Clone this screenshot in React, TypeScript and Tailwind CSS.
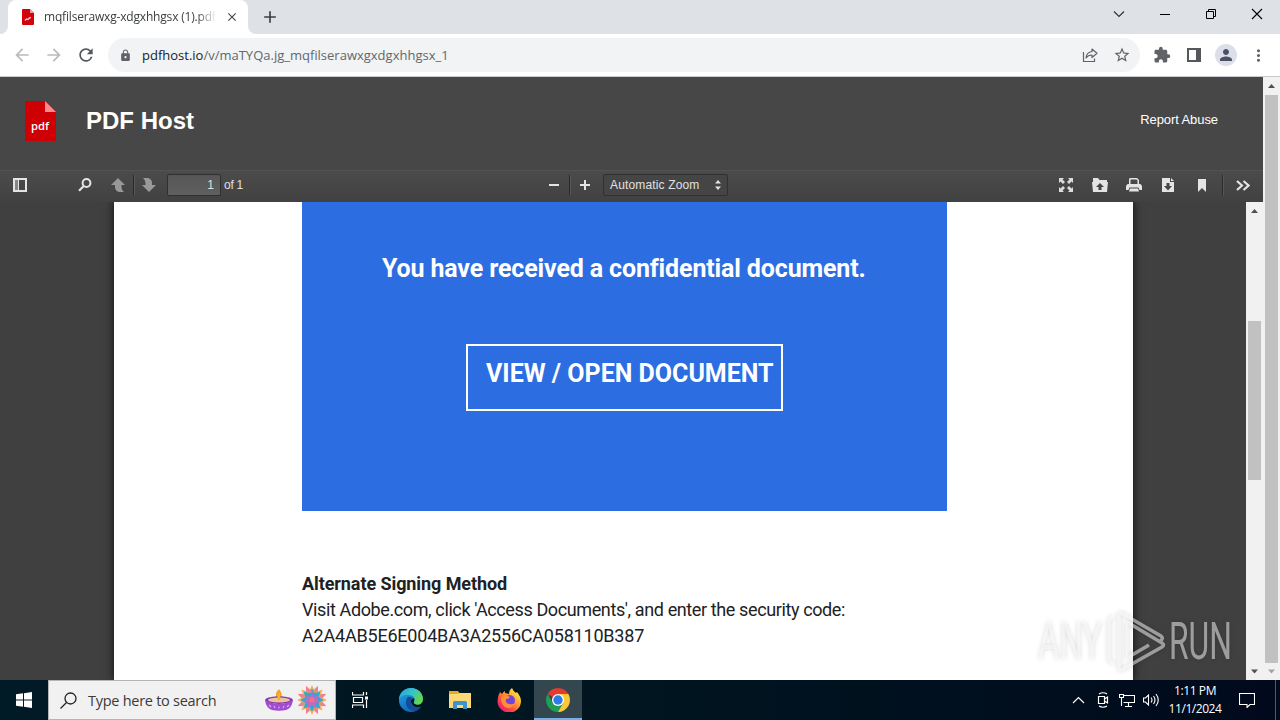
import type { ReactNode } from "react"
import {
  MdAdd,
  MdArrowBack,
  MdArrowForward,
  MdClose,
  MdExtension,
  MdLock,
  MdMoreVert,
  MdPerson,
  MdRefresh,
  MdStarBorder,
} from "react-icons/md"

type IconProps = {
  w: number
  h: number
  className?: string
  children: ReactNode
}

const Icon = ({ w, h, className = "", children }: IconProps) => (
  <svg width={w} height={h} viewBox={`0 0 ${w} ${h}`} className={`shrink-0 ${className}`} fill="none">
    {children}
  </svg>
)

const TabStrip = () => {
  return (
    <div className="flex h-[34px] w-full shrink-0 items-end bg-[#dee1e6]">
      <Icon w={8} h={8}>
        <path d="M8 0v8H0a8 8 0 0 0 8-8z" fill="#fff" />
      </Icon>
      <div className="flex h-[34px] w-[240px] items-center rounded-t-lg bg-white pl-[14px]">
        <Icon w={12} h={16}>
          <path d="M0 1q0-1 1-1h7l4 4v11q0 1-1 1H1q-1 0-1-1z" fill="#d0040a" />
          <path d="M8 0l4 4H8z" fill="#f79a9a" />
          <path d="M3 11.500l1.500-1.500 1.500.500 1.500-1.500 1.500-.500" stroke="#f8b9b9" strokeWidth="1.500" />
        </Icon>
        <span className="ml-[10px] w-[174px] whitespace-nowrap font-['Open_Sans',sans-serif] text-[12px] leading-4 tracking-[-0.180px] text-[#3c4043] [mask-image:linear-gradient(to_right,black_88%,transparent_99%)]">
          mqfilserawxg-xdgxhhgsx (1).pdf
        </span>
        <MdClose className="ml-[7px] h-[14px] w-[14px] text-[#45494d]" />
      </div>
      <Icon w={8} h={8}>
        <path d="M0 0v8h8a8 8 0 0 1-8-8z" fill="#fff" />
      </Icon>
      <div className="flex h-[34px] flex-1 items-center">
        <MdAdd className="ml-1 h-5 w-5 text-[#3c4043]" />
        <div className="ml-auto flex items-center pr-[17px] pb-[6px] text-black">
          <Icon w={12} h={12}>
            <path d="M1 3.500l5 5 5-5" stroke="#333" strokeWidth="1.200" />
          </Icon>
          <Icon w={12} h={12} className="ml-[34px]">
            <path d="M1 6.500h10" stroke="currentColor" />
          </Icon>
          <Icon w={12} h={12} className="ml-[34px]">
            <path d="M1.500 3.500h7v7h-7zM3.500 3V1.500h7v7H9" stroke="currentColor" />
          </Icon>
          <Icon w={12} h={12} className="ml-[34px]">
            <path d="M1 1l10 10M11 1L1 11" stroke="currentColor" strokeWidth="1.100" />
          </Icon>
        </div>
      </div>
    </div>
  )
}

const AddressBar = () => {
  return (
    <div className="flex h-[43px] w-full shrink-0 items-center border-b border-[#c8cacd] bg-white pl-3">
      <MdArrowBack className="h-5 w-5 text-[#b9bbbe]" />
      <MdArrowForward className="ml-3 h-5 w-5 text-[#b9bbbe]" />
      <MdRefresh className="ml-3 h-5 w-5 text-[#54585c]" />
      <div className="ml-3 flex h-[34px] w-[1032px] items-center rounded-full bg-[#f1f3f4] pr-[9px] pl-[11px]">
        <MdLock className="h-[13px] w-[13px] text-[#5f6368]" />
        <span className="ml-[10px] whitespace-nowrap font-['Open_Sans',sans-serif] text-[13px] leading-4 text-[#63676b]">
          <span className="text-[#202124]">pdfhost.io</span>/v/maTYQa.jg_mqfilserawxgxdgxhhgsx_1
        </span>
        <Icon w={16} h={16} className="ml-auto text-[#5f6368]">
          <path d="M1.500 5v9.500h11V11.500" stroke="currentColor" strokeWidth="1.200" />
          <path d="M10 2l5 4.300-5 4.200V8C7.500 8 5.500 8.700 4 11c.300-3.800 2.400-6 6-6.500z" stroke="currentColor" strokeWidth="1.200" strokeLinejoin="round" />
        </Icon>
        <MdStarBorder className="ml-[15px] h-[18px] w-[18px] text-[#5f6368]" />
      </div>
      <MdExtension className="ml-[13px] h-[18px] w-[18px] text-[#5f6368]" />
      <Icon w={14} h={14} className="ml-4">
        <path d="M0 0h14v14H0zM2 2v10h7V2z" fill="#54585d" fillRule="evenodd" />
      </Icon>
      <div className="ml-[14px] flex h-[22px] w-[22px] items-center justify-center rounded-full bg-[#dcdfe8]">
        <MdPerson className="h-[18px] w-[18px] text-[#4b5266]" />
      </div>
      <MdMoreVert className="ml-[12px] h-[19px] w-[19px] text-[#5f6368]" />
    </div>
  )
}

const SiteHeader = () => {
  return (
    <div className="flex h-[93px] shrink-0 items-center bg-[#474747] pr-[45px] pb-[5px] pl-[25px]">
      <svg width="32" height="40" viewBox="0 0 32 40" className="shrink-0">
        <path d="M0 1q0-1 1-1h19l11 11v28q0 1-1 1H1q-1 0-1-1z" fill="#ce0003" />
        <path d="M20 0l11 11H20z" fill="#fb8b8b" />
        <text x="6" y="29" fill="#fff" className="font-['Open_Sans',sans-serif] text-[11.500px] font-semibold" textLength="18" lengthAdjust="spacingAndGlyphs">
          pdf
        </text>
      </svg>
      <h1 className="ml-[29px] font-['Liberation_Sans',Arial,sans-serif] text-2xl font-bold text-white">PDF Host</h1>
      <a className="mb-[2px] ml-auto font-['Liberation_Sans',Arial,sans-serif] text-[13px] tracking-[-0.080px] text-white">Report Abuse</a>
    </div>
  )
}

const Divider = ({ className = "" }: { className?: string }) => (
  <div className={`h-5 w-px shrink-0 bg-[#2a2a2a] shadow-[1px_0_0_#575757] ${className}`} />
)

const PdfToolbar = () => {
  return (
    <div className="flex h-8 shrink-0 items-center border-t border-[#525252] bg-linear-to-b from-[#4b4b4b] to-[#414141] pb-[3px] pl-[13px] font-['Liberation_Sans',Arial,sans-serif] text-xs text-[#e0e0e0]">
      <Icon w={14} h={14}>
        <path d="M0 0h14v14H0zM2 2v10h3V2zM6 2v10h6V2z" fill="#e4e4e4" fillRule="evenodd" />
        <path d="M2 2h3v10H2z" fill="#858585" />
      </Icon>
      <Icon w={14} h={14} className="ml-[51px]">
        <circle cx="8.500" cy="5" r="3.900" stroke="#e4e4e4" strokeWidth="2" />
        <path d="M5.500 8.200L1 12.700" stroke="#e4e4e4" strokeWidth="2.200" />
      </Icon>
      <Icon w={14} h={14} className="ml-[19px]">
        <path d="M7 0l7 7h-3.500v2.500q0 2.500 2.500 4.500H8Q4 13 4 9V7H0z" fill="#999" />
      </Icon>
      <Divider className="ml-[8px]" />
      <Icon w={14} h={14} className="ml-[8px]">
        <path d="M7 14L0 7h3.500V5Q3.500 2 1 0h5q4 1 4 5v2h4z" fill="#999" />
      </Icon>
      <div className="ml-[11px] flex h-[22px] w-[54px] items-center justify-end rounded-xs border border-[#303030] bg-linear-to-b from-[#565656] to-[#606060] pr-[6px]">1</div>
      <span className="ml-[3px] w-5 whitespace-nowrap tracking-[-0.250px]">of 1</span>

      <Icon w={10} h={10} className="ml-[305px]">
        <path d="M0 4h10v2H0z" fill="#e4e4e4" />
      </Icon>
      <Divider className="ml-[10px]" />
      <Icon w={10} h={10} className="ml-[10px]">
        <path d="M0 4h10v2H0zM4 0h2v10H4z" fill="#e4e4e4" />
      </Icon>
      <div className="ml-[13px] flex h-[22px] w-[125px] items-center rounded-xs border border-[#303030] bg-[#454545] pr-[6px] pl-[6px]">
        <span className="whitespace-nowrap tracking-[0.150px]">Automatic Zoom</span>
        <Icon w={6} h={10} className="ml-auto">
          <path d="M3 0l3 3.500H0zM3 10l3-3.500H0z" fill="#e4e4e4" />
        </Icon>
      </div>

      <Icon w={14} h={14} className="ml-[331px]">
        <path
          d="M0 0h5L3.500 1.500 6 4 4 6 1.500 3.500 0 5zM14 0H9l1.500 1.500L8 4l2 2 2.500-2.500L14 5zM0 14h5l-1.500-1.500L6 10 4 8l-2.500 2.500L0 9zM14 14H9l1.500-1.500L8 10l2-2 2.500 2.500L14 9z"
          fill="#ddd"
        />
      </Icon>
      <Icon w={16} h={14} className="ml-[19px]">
        <path d="M1 0h5l1.500 2H15v2H1z" fill="#e4e4e4" />
        <path d="M0 4h16l-1 10H1zM8 5L4 9h2.500v3h3V9H12z" fill="#e4e4e4" fillRule="evenodd" />
      </Icon>
      <Icon w={16} h={14} className="ml-[18px]">
        <path d="M4 0h7l2 2v4h1.500L16 8v4h-2.500L12.500 9.500h-9L2.500 12H0V8l1.500-2H3V1zM4.500 1.500V6h7V2.500l-1-1z" fill="#e4e4e4" fillRule="evenodd" />
        <path d="M4 10.500h8l1 3H3z" fill="#e4e4e4" />
      </Icon>
      <Icon w={12} h={14} className="ml-5">
        <path d="M0 0h8v4h4v10H0zM4.500 5v3H2l4 4.500L10 8H7.500V5z" fill="#e4e4e4" fillRule="evenodd" />
        <path d="M9 0l3 3H9z" fill="#e4e4e4" />
      </Icon>
      <Icon w={8} h={13} className="ml-6">
        <path d="M0 0h8v13L4 9l-4 4z" fill="#e4e4e4" />
      </Icon>
      <Divider className="ml-4" />
      <Icon w={14} h={11} className="ml-[13px]">
        <path d="M1 1l5 4.500L1 10M7.500 1l5 4.500-5 4.500" stroke="#e4e4e4" strokeWidth="2.200" />
      </Icon>
    </div>
  )
}

const Document = () => {
  return (
    <div className="flex h-[478px] w-[1019px] shrink-0 flex-col bg-white pl-[188px] font-[Roboto,sans-serif] shadow-[0_0_8px_1px_rgba(0,0,0,0.650)]">
      <div className="flex h-[309px] w-[645px] shrink-0 flex-col bg-[#2c6ee2] text-white">
        <p className="mt-[50px] ml-[80px] whitespace-nowrap text-[25px] leading-[34px] font-bold tracking-[-0.140px]">
          You have received a confidential document.
        </p>
        <div className="mt-[58px] ml-[164px] flex h-[67px] w-[317px] border-2 border-white pt-[11px] pl-[18px]">
          <span className="whitespace-nowrap text-[25px] leading-[34px] font-bold">VIEW / OPEN DOCUMENT</span>
        </div>
      </div>
      <div className="mt-[60px] whitespace-nowrap text-[18px] leading-[26px] text-[#202124]">
        <p className="font-bold tracking-[-0.080px]">Alternate Signing Method</p>
        <p className="tracking-[-0.385px]">Visit Adobe.com, click 'Access Documents', and enter the security code:</p>
        <p className="tracking-[-0.200px]">A2A4AB5E6E004BA3A2556CA058110B387</p>
      </div>
    </div>
  )
}

type ScrollbarProps = { thumb: string; downColor: string }

const Scrollbar = ({ thumb, downColor }: ScrollbarProps) => (
  <div className="flex w-[17px] shrink-0 flex-col items-center bg-[#f1f1f1]">
    <Icon w={17} h={18}>
      <path d="M5 11l3.500-4 3.500 4z" fill="#505050" />
    </Icon>
    <div className={`w-[13px] bg-[#c1c1c1] ${thumb}`} />
    <Icon w={17} h={17} className="mt-auto">
      <path d="M5 6.500l3.500 4 3.500-4z" fill={downColor} />
    </Icon>
  </div>
)

const Watermark = () => (
  <svg width="210" height="70" viewBox="0 0 210 70" className="absolute top-[608px] left-[1034px] overflow-visible drop-shadow-[0_0_2px_rgba(0,0,0,0.300)]" fill="none">
    <g fill="#fff" fillOpacity="0.500" className="font-[Roboto,sans-serif] text-[51px]">
      <text x="4" y="51" textLength="64" lengthAdjust="spacingAndGlyphs">
        ANY
      </text>
      <text x="135" y="51" textLength="63" lengthAdjust="spacingAndGlyphs">
        RUN
      </text>
    </g>
    <path
      d="M79 9q-4 1-4 5v36q0 4 4 5M115 37L93 50V14l35 21q3 2 0 4L89 61q-4 2-4-2V8q0-4 4-2l38 22q3 3-1 5"
      stroke="#fff"
      strokeOpacity="0.500"
      strokeWidth="3.600"
      strokeLinejoin="round"
    />
  </svg>
)

const Taskbar = () => {
  return (
    <div className="flex h-10 w-full shrink-0 items-center bg-linear-to-r from-[#001a26] via-[#001520] to-[#000a1c] font-['Open_Sans',sans-serif]">
      <Icon w={16} h={16} className="ml-4">
        <path d="M0 2.300L7 1.300v6.200H0zM8 1.150L16 0v7.500H8zM0 8.500h7v6.200l-7-1zM8 8.500h8V16l-8-1.150z" fill="#fff" />
      </Icon>
      <div className="ml-4 flex h-10 w-72 items-center border border-[#b5b5b5] bg-[#f1f1f1] pl-[11px]">
        <Icon w={17} h={17}>
          <circle cx="10.500" cy="6.500" r="5.500" stroke="#222" strokeWidth="1.300" />
          <path d="M6.500 10.500L.500 16.500" stroke="#222" strokeWidth="1.300" />
        </Icon>
        <span className="mt-px ml-[11px] w-[129px] whitespace-nowrap text-[14.500px] tracking-[-0.270px] text-[#3a3a3a]">Type here to search</span>
        <svg width="28" height="22" viewBox="0 0 28 22" className="ml-[48px]">
          <path d="M14 0q4 5 2 10h-4q-3-5 2-10z" fill="#f6a21c" />
          <path d="M0 11q0-3 14-4 14 1 14 4 0 3-14 4-14-1-14-4z" fill="#8438ae" />
          <ellipse cx="14" cy="11" rx="11" ry="2.500" fill="#ecc39a" />
          <path d="M14 3q2.500 4 1 8h-2q-2-4 1-8z" fill="#f9b02c" />
          <path d="M0 11q7 4 14 4t14-4q-1 8-7 10-7 1.500-14 0-6-2-7-10z" fill="#a14bd1" />
          <path d="M4 16l2 2M9 17l1 2M14 17.500v2M19 17l-1 2M24 16l-2 2" stroke="#d9a4f5" strokeWidth="1.200" />
        </svg>
        <svg width="32" height="32" viewBox="-16 -16 32 32" className="ml-[3px]">
          {[0, 45, 90, 135, 180, 225, 270, 315].map((angle) => (
            <g key={angle} transform={`rotate(${angle})`}>
              <path d="M0-15.500l4 9h-8z" fill="#ee7f96" transform="rotate(22.500)" />
              <path d="M0-15l4 9h-8z" fill="#f4b04c" />
              <path d="M0-11.500l4 6h-8z" fill="#35a8cf" />
            </g>
          ))}
          <circle r="7.500" fill="#36a5d4" />
          <path d="M0-7l2 4 5-2-2 5 4 2-5 1 0 5-4-3-4 3 0-5-5-1 4-3-2-4 5 2z" fill="#c06ac0" />
          <circle r="2.500" fill="#f3708a" />
        </svg>
      </div>

      <Icon w={16} h={18} className="ml-4 text-white">
        <path d="M.500 1v3h11V1M.500 17v-3h11v3M1.500 6.500h9v5h-9zM14.500 1v3M14.500 9v8" stroke="currentColor" strokeWidth="1.200" />
        <path d="M13 5.500h3v3h-3z" fill="currentColor" />
      </Icon>

      <svg width="24" height="24" viewBox="0 0 24 24" className="ml-[31px]">
        <defs>
          <linearGradient id="edgeTop" x1="0" y1="0" x2="1" y2="0.500">
            <stop offset="0" stopColor="#249fdc" />
            <stop offset="0.500" stopColor="#32c2cf" />
            <stop offset="1" stopColor="#62d84b" />
          </linearGradient>
          <linearGradient id="edgeBody" x1="0" y1="0" x2="0.500" y2="1">
            <stop offset="0" stopColor="#2ba5e3" />
            <stop offset="1" stopColor="#0d66bd" />
          </linearGradient>
        </defs>
        <path d="M12 0A12 12 0 1 0 22 18.500Q17 21 13.500 17L24 12A12 12 0 0 0 12 0z" fill="url(#edgeBody)" />
        <path d="M0 11C1 4 6 0 12 0c7 0 12 5 12 11 0 4-3 6-6 6-2 0-4-1-3-3 2-4-1-7-5-7C6 6 2 8 0 11z" fill="url(#edgeTop)" />
        <path d="M8 10c-3 5 0 13 8 13.300q4-1.300 6-4.500c-4 2-9 .500-10-4-.500-2 0-4 1-5-2-1.500-4-1.200-5 .200z" fill="#124d97" />
        <path d="M14.500 10q-3 1-2.500 4 1 4 5 4 3 0 5-1.500-3 .500-5 0-3-1-2-3 1-2-.500-3.500z" fill="#001722" />
      </svg>

      <svg width="22" height="19" viewBox="0 0 22 19" className="ml-[26px]">
        <path d="M0 0h9l1.500 2H22v15H0z" fill="#e8a92b" />
        <path d="M0 3h9l1.500-1H22v15H0z" fill="#fcd975" />
        <path d="M4 11.500q0-1.500 1.500-1.500h11q1.500 0 1.500 1.500V18h-4v-4H8v4H4z" fill="#3e93cf" />
      </svg>

      <svg width="24" height="24" viewBox="0 0 24 24" className="ml-[26px]">
        <defs>
          <linearGradient id="fox" x1="0.900" y1="0.100" x2="0.200" y2="0.900">
            <stop offset="0" stopColor="#fff04b" />
            <stop offset="0.400" stopColor="#ffa22c" />
            <stop offset="0.700" stopColor="#ff4f43" />
            <stop offset="1" stopColor="#e81f74" />
          </linearGradient>
        </defs>
        <path d="M3 4l2 2q1-2 3-3v2l4 1Q12 2 15 0q1 3 4 5l1-1q4 5 4 9A11.600 11.600 0 0 1 .500 13Q.500 8 3 4z" fill="url(#fox)" />
        <circle cx="12.500" cy="12.500" r="5.500" fill="#7543d8" />
        <path d="M4 9q3-3 7-1l2 1q-1 2-4 2-1 4 3 5 3 1 6-1-2 5-7 5-7-1-7-11z" fill="#ff8f32" />
      </svg>

      <div className="ml-[13px] flex h-10 w-12 items-center justify-center border-b-2 border-[#76b0e8] bg-[#34474f]">
        <svg width="24" height="24" viewBox="0 0 24 24" className="mt-[2px]">
          <path d="M12 12L1.608 6A12 12 0 0 1 22.392 6z" fill="#e33b2e" />
          <path d="M1.608 6A12 12 0 0 0 12 24l5.200-9L12 12 6.800 15z" fill="#1f9d55" />
          <path d="M22.392 6A12 12 0 0 1 12 24l5.200-9L12 6z" fill="#fcc934" />
          <circle cx="12" cy="12" r="6" fill="#fff" />
          <circle cx="12" cy="12" r="4.700" fill="#2c7be9" />
        </svg>
      </div>

      <div className="ml-auto flex h-10 items-center text-white">
        <Icon w={13} h={8}>
          <path d="M1 7l5.500-5.500L12 7" stroke="currentColor" strokeWidth="1.200" />
        </Icon>
        <Icon w={12} h={16} className="ml-3">
          <path d="M1.500 4.500h6v7h-6zM7.500 7l3-2v6l-3-2M2 2q4-2.500 8 0M2 14q4 2.500 8 0" stroke="currentColor" strokeWidth="1.200" />
        </Icon>
        <Icon w={16} h={14} className="ml-[10px]">
          <path d="M5 2.500h10.500v7H4.500M9.500 10v3M6 13.500h7M.500 1.500h4v3h-4zM2.500 5v8" stroke="currentColor" strokeWidth="1.100" />
        </Icon>
        <Icon w={16} h={14} className="ml-2">
          <path d="M.500 5v4h2l3 3V2l-3 3zM8 4.500q2 2.500 0 5M10.500 3q3 4 0 8M13 1q4.500 6 0 12" stroke="currentColor" strokeWidth="1.100" />
        </Icon>
        <div className="ml-[7px] flex w-[58px] flex-col items-center text-[12px] leading-[18px] whitespace-nowrap">
          <span className="tracking-[-0.400px]">1:11 PM</span>
          <span className="tracking-[-0.450px]">11/1/2024</span>
        </div>
        <Icon w={16} h={16} className="ml-[15px]">
          <path d="M.500 1.500h15v11h-4.500l-3 3v-3H.500z" stroke="currentColor" strokeWidth="1.100" />
        </Icon>
        <div className="ml-[20px] h-10 w-px bg-[#51596a]" />
        <div className="w-[4px]" />
      </div>
    </div>
  )
}

const App = () => {
  return (
    <div className="relative flex h-[720px] w-[1280px] flex-col overflow-hidden bg-white">
      <TabStrip />
      <AddressBar />
      <div className="flex h-[603px] w-full shrink-0">
        <div className="flex w-[1263px] shrink-0 flex-col">
          <SiteHeader />
          <PdfToolbar />
          <div className="flex h-[478px] bg-[#404040]">
            <div className="flex w-[1246px] justify-start overflow-hidden pl-[114px]">
              <Document />
            </div>
            <Scrollbar thumb="mt-[101px] h-[159px]" downColor="#505050" />
          </div>
        </div>
        <Scrollbar thumb="h-[568px]" downColor="#a3a3a3" />
      </div>
      <Taskbar />
      <Watermark />
    </div>
  )
}

export default App
